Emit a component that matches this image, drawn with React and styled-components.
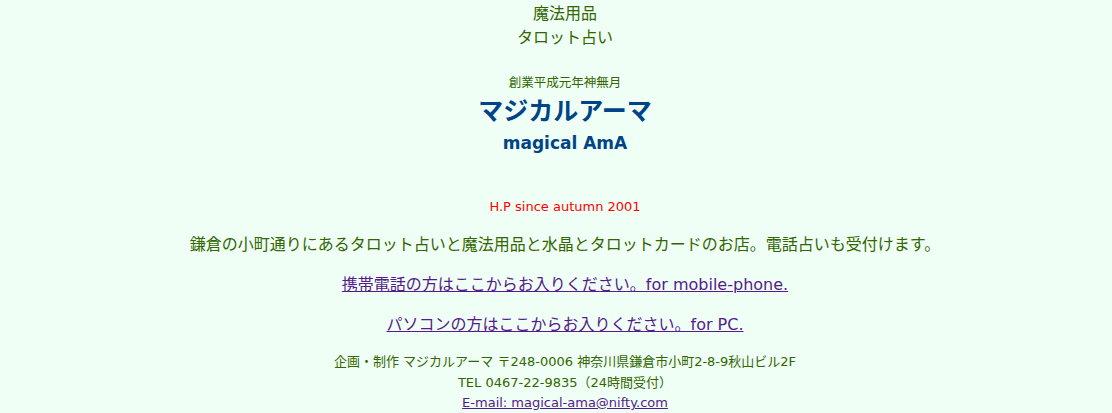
import React from "react";
import styled, { createGlobalStyle } from "styled-components";

const GlobalStyle = createGlobalStyle`
  body {
    margin: 0;
    background: #f0fff5;
    font-family: "DejaVu Sans", "Noto Sans CJK JP", sans-serif;
    color: #336600;
  }
`;

const Page = styled.div`
  display: flex;
  flex-direction: column;
  align-items: center;
  text-align: center;
  padding: 2px 0 0 18px;
`;

const Category = styled.div`
  font-size: 16px;
  line-height: 24px;
`;

const Since = styled.div`
  font-size: ${(p) => p.$size || 13}px;
  line-height: 18px;
  margin-top: ${(p) => p.$gap || 0}px;
  color: ${(p) => p.$color || "#336600"};
`;

const Title = styled.h1`
  margin: 0;
  padding-top: 3px;
  font-size: 25px;
  line-height: 34px;
  font-weight: bold;
  color: #004488;
`;

const SubTitle = styled.h2`
  margin: 0;
  font-size: 17px;
  line-height: 29px;
  font-weight: bold;
  color: #004488;
`;

const Lead = styled.p`
  margin: 17px 0 0;
  font-size: 16px;
  line-height: 24px;
`;

const EntryLink = styled.a`
  display: block;
  margin-top: 16px;
  font-size: 16px;
  line-height: 24px;
  color: #551a8b;
  text-decoration: underline;
`;

const Footer = styled.div`
  margin-top: 15px;
  font-size: 13px;
  line-height: 20.5px;
`;

const MailLink = styled.a`
  color: #551a8b;
  text-decoration: underline;
`;

export default function App() {
  return (
    <>
      <GlobalStyle />
      <Page>
        <Category>魔法用品</Category>
        <Category>タロット占い</Category>
        <Since $gap={24} $size={12.5}>創業平成元年神無月</Since>
        <Title>マジカルアーマ</Title>
        <SubTitle>magical AmA</SubTitle>
        <Since $gap={40} $color="#ff0000">H.P since autumn 2001</Since>
        <Lead>鎌倉の小町通りにあるタロット占いと魔法用品と水晶とタロットカードのお店。電話占いも受付けます。</Lead>
        <EntryLink href="#">携帯電話の方はここからお入りください。for mobile-phone.</EntryLink>
        <EntryLink href="#">パソコンの方はここからお入りください。for PC.</EntryLink>
        <Footer>
          <div>企画・制作 マジカルアーマ 〒248-0006 神奈川県鎌倉市小町2-8-9秋山ビル2F</div>
          <div>TEL 0467-22-9835（24時間受付）</div>
          <div>
            <MailLink href="#">E-mail: magical-ama@nifty.com</MailLink>
          </div>
        </Footer>
      </Page>
    </>
  );
}
